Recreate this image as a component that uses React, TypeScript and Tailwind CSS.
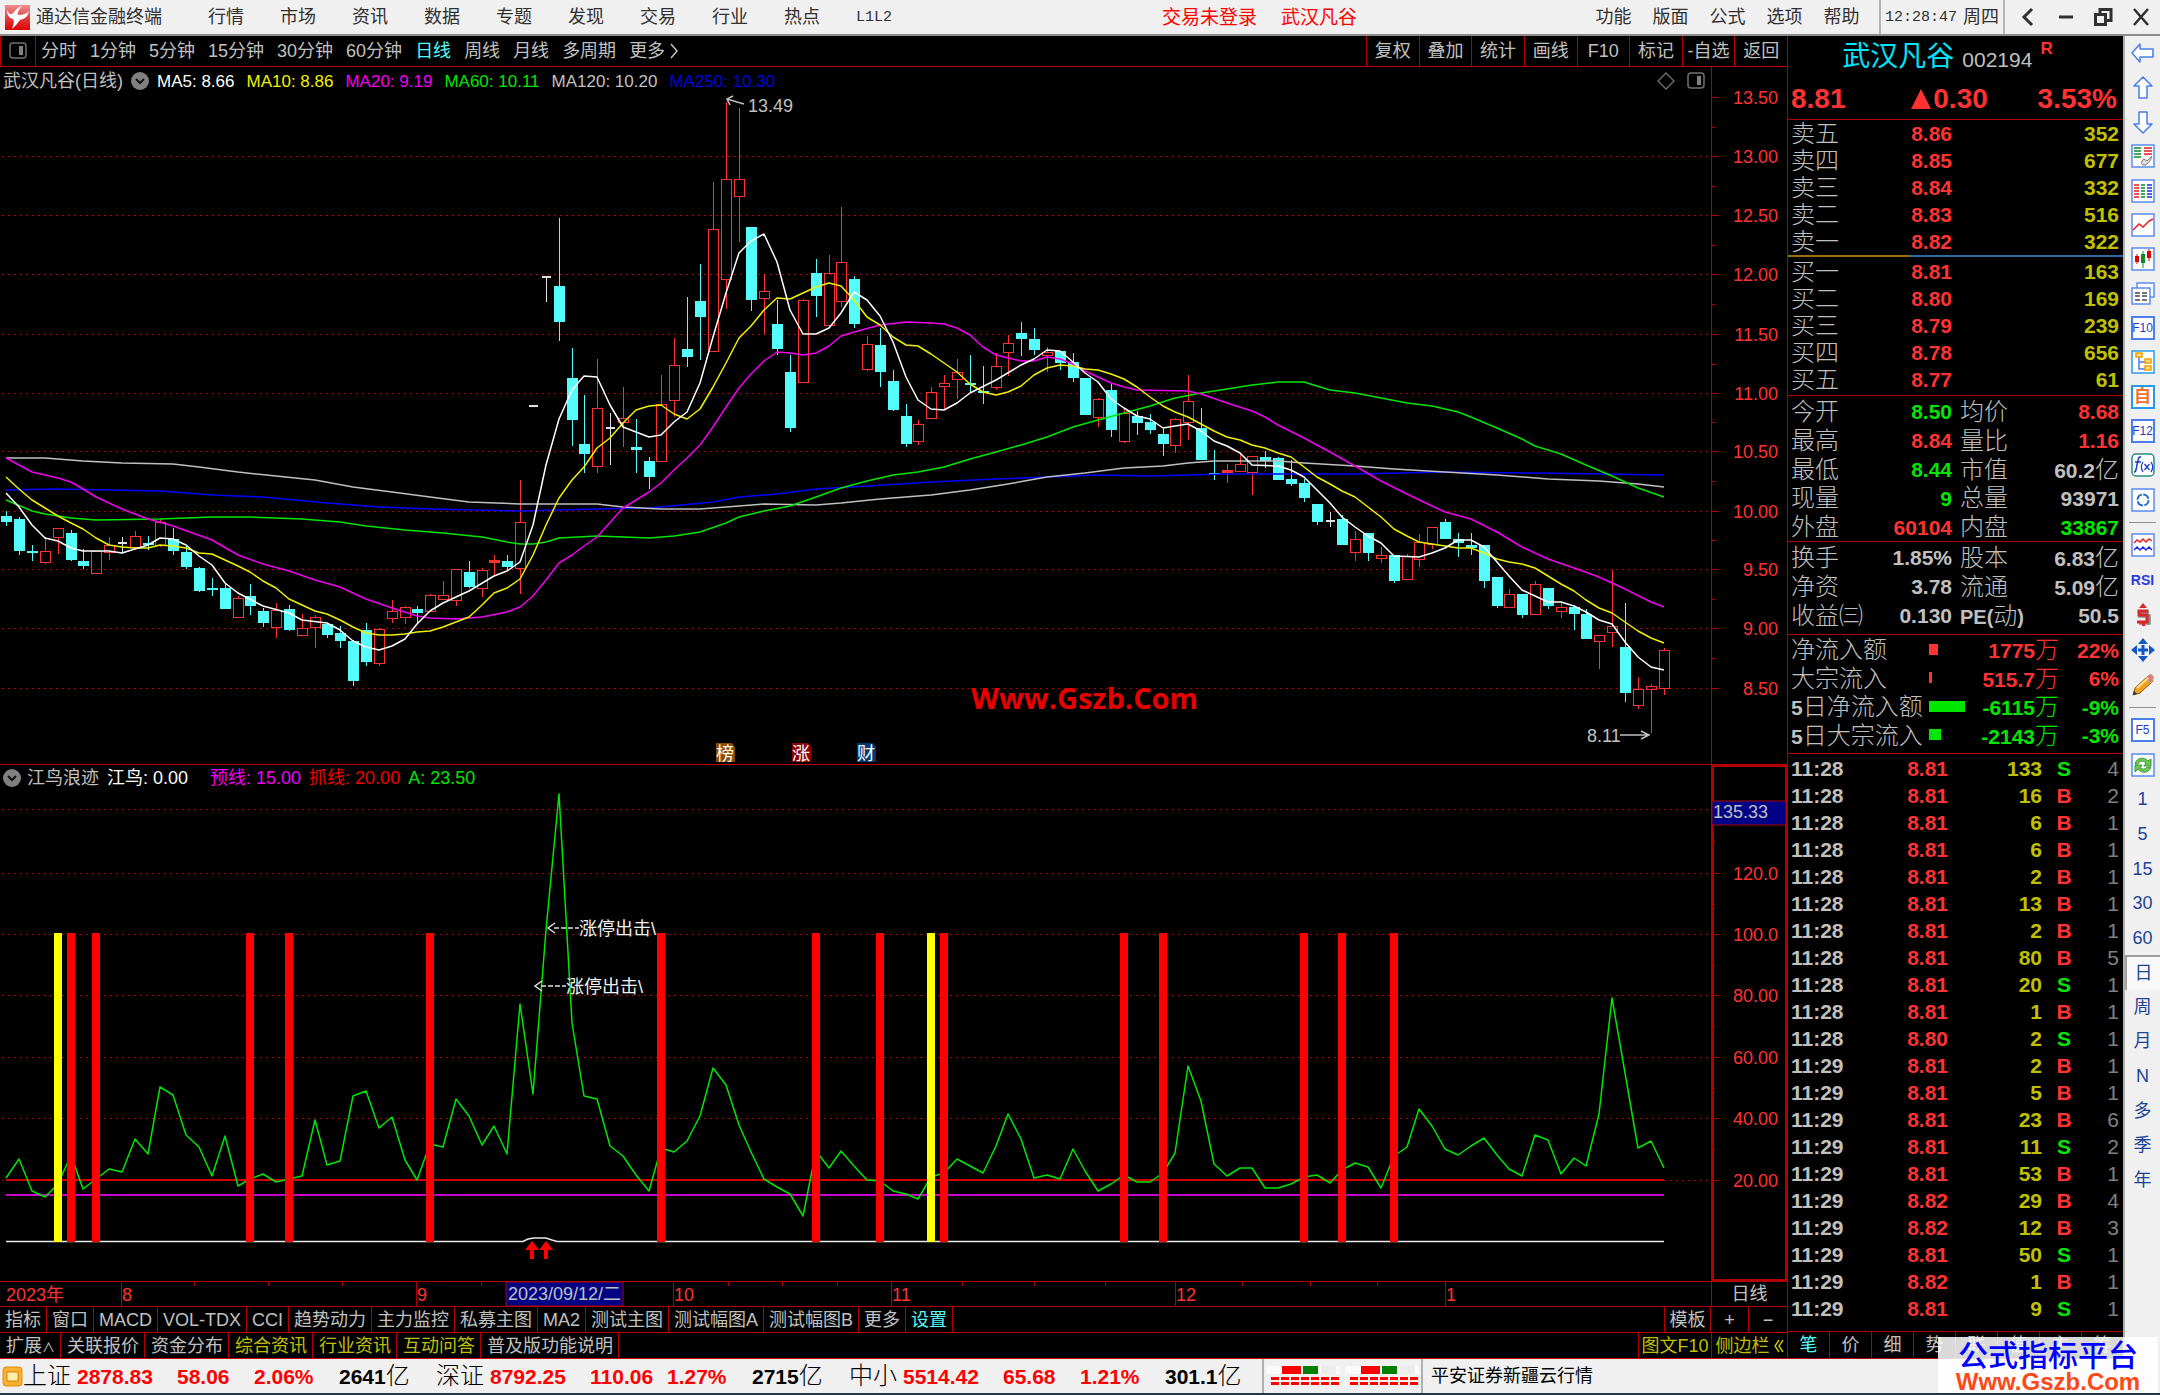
import React from "react";

type Kind = "c" | "r" | "w";
type Candle = [Kind, number, number, number, number];
type Point = [number, number];

const RED = "#ff3232";
const CYAN = "#54fcfc";
const LINE = "#b00000";

/* Candles: kind, high, body top, body bottom, low (vertical chart units). */
const candles: Candle[] = [
  ["c", 511, 516, 522, 526], ["c", 517, 519, 551, 555], ["c", 545, 551, 553, 561], ["r", 537, 551, 562, 564],
  ["r", 528, 528, 537, 554], ["c", 530, 533, 560, 561], ["c", 549, 561, 566, 569], ["r", 551, 551, 573, 573],
  ["r", 537, 545, 552, 560], ["w", 537, 543, 543, 553], ["r", 531, 536, 547, 547], ["c", 536, 543, 545, 550],
  ["r", 519, 522, 545, 547], ["c", 528, 539, 551, 555], ["c", 545, 552, 567, 569], ["c", 567, 568, 591, 592],
  ["c", 578, 588, 590, 596], ["c", 583, 588, 609, 609], ["r", 596, 598, 617, 617], ["c", 584, 596, 606, 615],
  ["c", 608, 611, 623, 627], ["r", 603, 610, 627, 638], ["c", 605, 609, 630, 631], ["r", 614, 628, 635, 635],
  ["r", 615, 617, 627, 648], ["c", 623, 624, 635, 638], ["c", 626, 633, 641, 648], ["c", 640, 641, 681, 686],
  ["c", 623, 630, 662, 666], ["r", 628, 629, 663, 666], ["r", 600, 611, 618, 623], ["r", 606, 607, 617, 624],
  ["c", 606, 609, 613, 623], ["r", 594, 595, 611, 611], ["r", 581, 595, 599, 600], ["r", 569, 569, 600, 606],
  ["c", 561, 572, 587, 588], ["r", 568, 570, 588, 597], ["r", 555, 560, 562, 576], ["c", 555, 561, 567, 570],
  ["r", 480, 522, 568, 594], ["w", 406, 406, 406, 406], ["w", 277, 277, 277, 302], ["c", 218, 286, 322, 341],
  ["c", 348, 378, 420, 446], ["c", 395, 444, 454, 473], ["r", 359, 408, 466, 473], ["w", 413, 428, 428, 465],
  ["r", 387, 418, 422, 447], ["c", 419, 447, 450, 473], ["c", 457, 461, 477, 489], ["r", 375, 404, 461, 462],
  ["r", 338, 365, 400, 417], ["c", 297, 349, 357, 367], ["c", 264, 301, 317, 360], ["r", 182, 229, 351, 351],
  ["r", 102, 179, 279, 309], ["r", 108, 179, 196, 242], ["c", 227, 227, 300, 311], ["r", 274, 291, 298, 334],
  ["c", 300, 324, 349, 355], ["c", 355, 372, 428, 432], ["r", 299, 300, 382, 383], ["c", 259, 273, 296, 317],
  ["r", 255, 273, 325, 327], ["r", 207, 262, 301, 307], ["c", 276, 279, 324, 328], ["r", 336, 344, 369, 371],
  ["c", 328, 345, 372, 387], ["c", 370, 381, 410, 411], ["c", 404, 416, 444, 447], ["r", 420, 424, 441, 445],
  ["r", 387, 392, 418, 418], ["r", 375, 383, 386, 409], ["r", 359, 372, 379, 399], ["c", 355, 383, 385, 393],
  ["c", 366, 391, 393, 404], ["r", 353, 366, 387, 390], ["r", 335, 343, 352, 376], ["c", 322, 333, 339, 356],
  ["c", 328, 339, 350, 355], ["r", 347, 352, 355, 372], ["c", 351, 351, 363, 370], ["c", 353, 362, 378, 382],
  ["c", 378, 378, 415, 415], ["r", 398, 399, 417, 427], ["c", 384, 390, 430, 437], ["r", 408, 413, 441, 443],
  ["c", 411, 416, 423, 435], ["c", 414, 422, 430, 434], ["c", 429, 434, 444, 456], ["r", 418, 419, 445, 453],
  ["r", 375, 401, 422, 440], ["c", 408, 428, 460, 460], ["c", 450, 473, 475, 480], ["r", 464, 470, 472, 483],
  ["r", 453, 464, 471, 472], ["r", 456, 456, 472, 495], ["c", 451, 457, 461, 468], ["c", 457, 458, 480, 480],
  ["c", 460, 479, 484, 486], ["c", 479, 483, 498, 502], ["c", 504, 504, 522, 525], ["w", 512, 521, 521, 527],
  ["c", 515, 519, 545, 545], ["r", 531, 539, 552, 561], ["c", 533, 533, 553, 561], ["r", 547, 555, 558, 563],
  ["c", 555, 555, 581, 583], ["r", 554, 556, 579, 579], ["r", 534, 542, 559, 567], ["r", 527, 527, 544, 549],
  ["c", 519, 522, 539, 539], ["c", 533, 539, 543, 557], ["c", 533, 545, 548, 555], ["c", 545, 545, 581, 588],
  ["c", 577, 577, 606, 608], ["r", 589, 594, 607, 607], ["c", 594, 594, 615, 618], ["r", 581, 584, 614, 615],
  ["c", 588, 588, 606, 609], ["r", 601, 607, 611, 618], ["c", 605, 607, 614, 630], ["c", 609, 614, 639, 639],
  ["r", 635, 635, 641, 669], ["r", 570, 626, 632, 647], ["c", 603, 647, 693, 702], ["r", 677, 689, 705, 709],
  ["r", 684, 686, 689, 733], ["r", 648, 650, 688, 695],
];

/* Moving averages: day index, vertical chart unit. */
const ma5: Point[] = [
  [0, 493], [1, 507], [2, 525], [3, 538], [4, 541], [5, 548], [6, 551], [8, 551], [9, 553], [11, 545], [12, 538],
  [13, 539], [14, 545], [15, 556], [16, 565], [17, 583], [18, 593], [20, 606], [22, 613], [23, 620], [25, 623],
  [26, 630], [27, 641], [28, 647], [29, 650], [30, 646], [31, 639], [32, 624], [33, 611], [34, 603], [36, 591],
  [38, 576], [39, 571], [40, 562], [41, 525], [42, 465], [43, 419], [44, 390], [45, 376], [46, 377], [47, 405],
  [48, 427], [49, 432], [50, 437], [51, 435], [52, 422], [53, 412], [54, 383], [55, 337], [56, 293], [57, 253],
  [58, 241], [59, 234], [60, 262], [61, 310], [62, 334], [63, 334], [64, 328], [65, 313], [66, 292], [67, 300],
  [68, 316], [69, 342], [70, 377], [71, 400], [72, 409], [73, 410], [74, 403], [75, 393], [77, 380], [79, 365],
  [80, 359], [81, 350], [82, 351], [83, 362], [84, 373], [85, 382], [86, 399], [87, 408], [88, 416], [89, 419],
  [90, 428], [91, 426], [92, 424], [93, 431], [94, 441], [95, 446], [96, 453], [97, 465], [99, 466], [100, 470],
  [101, 477], [102, 490], [103, 503], [104, 517], [105, 527], [106, 536], [107, 543], [108, 556], [110, 557],
  [111, 553], [112, 548], [113, 540], [114, 540], [115, 547], [116, 562], [117, 576], [118, 590], [119, 596],
  [120, 602], [121, 602], [122, 606], [123, 612], [124, 620], [125, 624], [126, 642], [127, 657], [128, 667],
  [129, 670],
];
const ma10: Point[] = [
  [0, 477], [1, 489], [2, 500], [3, 508], [4, 516], [5, 523], [6, 529], [7, 538], [8, 545], [9, 547], [10, 548],
  [11, 548], [12, 545], [13, 546], [14, 548], [15, 553], [16, 554], [17, 560], [18, 566], [19, 572], [20, 581],
  [21, 588], [22, 599], [23, 605], [24, 611], [25, 614], [26, 620], [27, 627], [28, 633], [29, 635], [30, 635],
  [31, 634], [32, 632], [33, 631], [34, 627], [35, 622], [36, 617], [37, 605], [38, 593], [39, 588], [40, 579],
  [41, 555], [42, 525], [43, 498], [44, 480], [45, 467], [46, 448], [47, 438], [48, 423], [49, 410], [50, 406],
  [51, 405], [52, 414], [53, 419], [54, 409], [55, 387], [56, 363], [57, 338], [58, 326], [59, 310], [60, 298],
  [61, 299], [62, 293], [63, 287], [64, 283], [65, 286], [66, 300], [67, 317], [68, 325], [69, 337], [70, 345],
  [71, 346], [72, 354], [73, 363], [74, 372], [75, 384], [76, 392], [77, 395], [78, 392], [79, 386], [80, 375],
  [81, 368], [82, 365], [83, 366], [84, 369], [85, 370], [86, 374], [87, 379], [88, 387], [89, 397], [90, 406],
  [91, 412], [92, 417], [93, 424], [94, 431], [95, 437], [96, 440], [97, 445], [98, 448], [99, 453], [100, 457],
  [101, 467], [102, 477], [103, 484], [104, 491], [105, 497], [106, 507], [107, 517], [108, 529], [109, 536],
  [110, 542], [111, 544], [112, 546], [113, 548], [114, 548], [115, 553], [116, 559], [117, 562], [118, 564],
  [119, 568], [120, 576], [121, 584], [122, 591], [123, 600], [124, 608], [125, 613], [126, 622], [127, 631],
  [128, 638], [129, 643],
];
const ma20: Point[] = [
  [0, 458], [2, 472], [4, 478], [5, 482], [6, 489], [7, 497], [9, 509], [11, 519], [13, 526], [16, 540], [18, 555],
  [20, 564], [22, 571], [24, 580], [26, 587], [28, 599], [30, 608], [32, 616], [33, 618], [35, 619], [37, 617],
  [39, 612], [40, 607], [41, 596], [42, 580], [43, 563], [44, 555], [45, 546], [46, 537], [48, 508], [50, 492],
  [51, 483], [52, 470], [53, 458], [54, 445], [55, 427], [56, 407], [57, 388], [58, 374], [59, 361], [60, 352],
  [61, 353], [62, 355], [63, 353], [64, 346], [65, 336], [66, 332], [68, 325], [70, 322], [72, 323], [73, 324],
  [74, 328], [75, 335], [76, 347], [77, 355], [78, 358], [79, 361], [80, 361], [81, 357], [82, 359], [83, 364],
  [84, 371], [85, 377], [86, 383], [87, 387], [88, 390], [92, 391], [93, 394], [95, 403], [97, 411], [98, 417],
  [99, 425], [101, 438], [103, 452], [105, 466], [107, 481], [109, 494], [111, 506], [112, 512], [114, 519],
  [116, 532], [118, 547], [120, 559], [122, 568], [124, 577], [126, 589], [128, 602], [129, 607],
];
const ma60: Point[] = [
  [0, 500], [2, 511], [3, 514], [5, 518], [7, 520], [12, 519], [16, 517], [19, 517], [23, 519], [26, 522], [28, 526],
  [31, 530], [34, 533], [37, 537], [39, 542], [40, 544], [41, 544], [42, 542], [43, 538], [46, 536], [50, 538],
  [52, 536], [54, 532], [56, 523], [57, 517], [59, 511], [61, 506], [63, 497], [65, 488], [67, 481], [69, 475],
  [71, 472], [73, 467], [75, 459], [77, 452], [79, 445], [81, 437], [83, 427], [85, 420], [87, 413], [89, 406],
  [91, 398], [93, 393], [95, 389], [97, 385], [99, 382], [101, 382], [103, 390], [105, 393], [107, 398], [109, 403],
  [111, 406], [113, 412], [114, 417], [116, 428], [118, 439], [119, 446], [120, 450], [121, 454], [123, 465],
  [125, 476], [127, 488], [129, 497],
];
const ma120: Point[] = [
  [0, 458], [3, 458], [6, 461], [9, 463], [13, 464], [15, 467], [18, 472], [21, 476], [24, 480], [27, 487],
  [30, 492], [33, 497], [36, 502], [40, 504], [46, 504], [48, 507], [51, 509], [54, 509], [57, 506], [59, 504],
  [63, 505], [65, 503], [68, 499], [72, 495], [75, 490], [78, 484], [81, 477], [84, 473], [87, 468], [90, 466],
  [92, 463], [94, 461], [99, 461], [101, 463], [105, 466], [108, 469], [112, 472], [116, 475], [120, 479],
  [124, 481], [127, 484], [129, 487],
];
const ma250: Point[] = [
  [0, 490], [4, 489], [8, 490], [12, 491], [16, 495], [20, 497], [25, 503], [29, 507], [33, 509], [40, 511],
  [46, 509], [50, 508], [55, 502], [57, 497], [60, 494], [63, 489], [67, 486], [72, 482], [77, 479], [81, 477],
  [85, 475], [89, 476], [92, 475], [95, 474], [105, 474], [112, 472], [119, 473], [124, 474], [129, 475],
];

const momentum: number[] = [
  1178, 1159, 1191, 1197, 1184, 1155, 1189, 1179, 1169, 1172, 1139, 1154, 1087, 1095, 1135, 1147, 1176, 1136, 1186,
  1179, 1174, 1182, 1179, 1176, 1120, 1165, 1161, 1096, 1091, 1128, 1117, 1160, 1180, 1144, 1147, 1099, 1116, 1145,
  1126, 1154, 1004, 1094, 930, 794, 1023, 1096, 1099, 1146, 1156, 1175, 1191, 1148, 1152, 1141, 1116, 1068, 1085,
  1125, 1152, 1179, 1187, 1194, 1216, 1151, 1168, 1151, 1166, 1180, 1181, 1191, 1194, 1199, 1177, 1173, 1159, 1166,
  1173, 1146, 1114, 1139, 1178, 1175, 1179, 1149, 1171, 1191, 1184, 1175, 1182, 1182, 1173, 1153, 1066, 1101, 1164,
  1176, 1168, 1168, 1188, 1188, 1184, 1177, 1175, 1183, 1170, 1163, 1167, 1188, 1156, 1147, 1109, 1126, 1149, 1155,
  1146, 1138, 1155, 1169, 1176, 1135, 1140, 1174, 1158, 1166, 1114, 998, 1073, 1148, 1141, 1168,
];

const signalBars: [number, string][] = [
  [4, "#ffff00"], [5, "#ff0000"], [7, "#ff0000"], [19, "#ff0000"], [22, "#ff0000"], [33, "#ff0000"],
  [51, "#ff0000"], [63, "#ff0000"], [68, "#ff0000"], [72, "#ffff00"], [73, "#ff0000"], [87, "#ff0000"],
  [90, "#ff0000"], [101, "#ff0000"], [104, "#ff0000"], [108, "#ff0000"],
];

const dayX = (i: number) => Math.floor(6.8 + 12.847 * i);
const toPoints = (pts: Point[]) => pts.map(([i, y]) => `${dayX(i)},${y}`).join(" ");

const priceTicks: [string, number][] = [
  ["13.50", 97], ["13.00", 156], ["12.50", 215], ["12.00", 274], ["11.50", 334], ["11.00", 393], ["10.50", 451],
  ["10.00", 511], ["9.50", 569], ["9.00", 628], ["8.50", 688],
];
const levelTicks: [string, number][] = [
  ["", 809], ["120.0", 873], ["100.0", 934], ["80.00", 995], ["60.00", 1057], ["40.00", 1118], ["20.00", 1180],
];

function Line({ pts, color }: { pts: string; color: string }) {
  return <polyline points={pts} fill="none" stroke={color} strokeWidth="1.5" strokeLinejoin="round" />;
}

function CandleShape({ c, i }: { c: Candle; i: number }) {
  const [kind, hi, top, bot, lo] = c;
  const x = dayX(i);
  if (kind === "w") {
    return (
      <g fill="#e0e0e0">
        <rect x={x - 4} y={top - 1} width="9" height="2" />
        {lo > hi && <rect x={x} y={hi} width="1" height={lo - hi} />}
      </g>
    );
  }
  if (kind === "c") {
    return (
      <g fill={CYAN}>
        <rect x={x} y={hi} width="1" height={Math.max(lo - hi, 1)} />
        <rect x={x - 5} y={top} width="11" height={Math.max(bot - top, 2)} />
      </g>
    );
  }
  return (
    <g fill={RED}>
      <rect x={x} y={hi} width="1" height={Math.max(top - hi, 0)} />
      <rect x={x} y={bot} width="1" height={Math.max(lo - bot, 0)} />
      {bot - top < 3 ? (
        <rect x={x - 5} y={top} width="11" height="3" />
      ) : (
        <path d={`M${x - 5} ${top}h11v${bot - top + 1}h-11zM${x - 4} ${top + 1}v${bot - top - 1}h9v-${bot - top - 1}z`} fillRule="evenodd" />
      )}
    </g>
  );
}

function Grid({ ticks }: { ticks: [string, number][] }) {
  return (
    <g>
      {ticks.map(([, y]) => (
        <line key={y} x1="2" x2="1711" y1={y + 0.5} y2={y + 0.5} stroke="#b00000" strokeWidth="1" strokeDasharray="2 4" />
      ))}
    </g>
  );
}

function Scale({ ticks }: { ticks: [string, number][] }) {
  return (
    <g>
      {ticks.map(([label, y], i) => (
        <g key={y}>
          <rect x="1711" y={y} width="8" height="1" fill={LINE} />
          {i < ticks.length - 1 && <rect x="1711" y={Math.round((y + ticks[i + 1][1]) / 2)} width="4" height="1" fill={LINE} />}
          <text x="1778" y={y + 7} textAnchor="end" fontSize="18" fill={RED}>{label}</text>
        </g>
      ))}
    </g>
  );
}

function PriceChart() {
  const marks: [string, number, string][] = [["榜", 716, "#8a4a00"], ["涨", 792, "#8b0000"], ["财", 857, "#003a70"]];
  return (
    <svg viewBox="0 67 1787 697" className="block h-auto w-full" role="img" aria-label="日线">
      <Grid ticks={priceTicks.slice(1)} />
      <rect x="1711" y="67" width="1" height="697" fill={LINE} />
      <Scale ticks={priceTicks} />
      <g shapeRendering="crispEdges">
        {candles.map((c, i) => <CandleShape key={i} c={c} i={i} />)}
      </g>
      <Line pts={toPoints(ma250)} color="#0000ff" />
      <Line pts={toPoints(ma120)} color="#c0c0c0" />
      <Line pts={toPoints(ma60)} color="#00e600" />
      <Line pts={toPoints(ma20)} color="#f000f0" />
      <Line pts={toPoints(ma10)} color="#f0f000" />
      <Line pts={toPoints(ma5)} color="#ffffff" />
      <path d="M744 104L727 99M733 96L727 99L730 105" fill="none" stroke="#c0c0c0" strokeWidth="1.5" />
      <text x="748" y="112" fontSize="18" fill="#c0c0c0">13.49</text>
      <path d="M1620 735H1649M1641 731L1649 735L1641 739" fill="none" stroke="#c0c0c0" strokeWidth="1.5" />
      <text x="1587" y="742" fontSize="18" fill="#c0c0c0">8.11</text>
      <text x="971" y="709" fontSize="29" fontWeight="700" fill="#e60000" style={{ fontFamily: '"Open Sans","Noto Sans",sans-serif' }}>
        Www.Gszb.Com
      </text>
      {marks.map(([t, x, bg]) => (
        <g key={t}>
          <path d={`M${x} 743h16l3 4v15h-19z`} fill={bg} />
          <text x={x} y="760" fontSize="18" fill="#ffffff">{t}</text>
        </g>
      ))}
    </svg>
  );
}

function IndicatorChart() {
  return (
    <svg viewBox="0 765 1787 516" className="block h-auto w-full" role="img" aria-label="江鸟浪迹">
      <Grid ticks={levelTicks} />
      <rect x="6" y="1179" width="1658" height="2" fill="#d00000" />
      <rect x="6" y="1194" width="1658" height="2" fill="#c800c8" />
      <path d="M6 1241.500H523L528 1239L534 1238H546L552 1240L557 1241.500H1664" fill="none" stroke="#e8e8e8" strokeWidth="1.500" />
      <Line pts={momentum.map((y, i) => `${dayX(i)},${y}`).join(" ")} color="#00e600" />
      {signalBars.map(([i, color]) => <rect key={i} x={dayX(i) - 4} y="933" width="8" height="309" fill={color} />)}
      {[532, 546].map((x) => (
        <path key={x} d={`M${x} 1241l7 9h-5v9h-4v-9h-5z`} fill="#ff0000" />
      ))}
      {[[547, 928], [534, 986]].map(([x, y]) => (
        <g key={x}>
          <path d={`M${x + 8} ${y - 5}L${x + 1} ${y}L${x + 8} ${y + 5}`} fill="none" stroke="#e0e0e0" strokeWidth="1.5" />
          <path d={`M${x + 7} ${y}h25`} stroke="#e0e0e0" strokeWidth="1.5" strokeDasharray="5 2" />
          <text x={x + 32} y={y + 7} fontSize="18" fill="#f0f0f0">涨停出击\</text>
        </g>
      ))}
      <rect x="1713" y="766" width="73" height="514" fill="none" stroke={LINE} strokeWidth="2" />
      <rect x="1711" y="765" width="1" height="516" fill={LINE} />
      <Scale ticks={levelTicks} />
      <rect x="1712" y="801" width="74" height="24" fill="#000084" stroke={LINE} />
      <text x="1713" y="818" fontSize="18" fill="#c0c0c0">135.33</text>
    </svg>
  );
}

function DateAxis() {
  const months: [string, number][] = [["8", 121], ["9", 416], ["10", 673], ["11", 891], ["12", 1175], ["1", 1445]];
  const minor = [194, 268, 342, 481, 728, 782, 837, 962, 1034, 1105, 1242, 1310, 1377];
  return (
    <svg viewBox="0 1282 1711 24" className="block h-auto min-w-0 flex-1" role="img" aria-label="日期">
      <text x="6" y="1301" fontSize="18" fill={RED}>2023年</text>
      {months.map(([m, x]) => (
        <g key={m}>
          <rect x={x} y="1282" width="1" height="24" fill={LINE} />
          <text x={x + 1} y="1301" fontSize="18" fill={RED}>{m}</text>
        </g>
      ))}
      {minor.map((x) => <rect key={x} x={x} y="1282" width="1" height="4" fill={LINE} />)}
      <rect x="506" y="1282" width="117" height="24" fill="#000084" stroke={LINE} />
      <text x="508" y="1300" fontSize="18" fill="#c0c0c0">2023/09/12/二</text>
    </svg>
  );
}

/* ---------- header ---------- */

function PanelIcon() {
  return (
    <svg viewBox="0 0 18 18" className="size-[18px]" aria-hidden="true">
      <rect x="1" y="1" width="16" height="15" rx="3" fill="none" stroke="#707070" strokeWidth="1.5" />
      <rect x="10" y="4" width="4" height="9" fill="#808080" />
    </svg>
  );
}

function MenuBar() {
  const menus = ["行情", "市场", "资讯", "数据", "专题", "发现", "交易", "行业", "热点", "L1L2"];
  const right = ["功能", "版面", "公式", "选项", "帮助"];
  return (
    <header className="flex h-9 items-center border-b-2 border-[#8c8c8c] bg-[#f0f0f0] text-[18px] text-[#303030]">
      <svg viewBox="0 0 25 25" className="ml-[5px] size-[25px]" aria-hidden="true">
        <defs>
          <linearGradient id="logo" x1="0" y1="0" x2="0" y2="1">
            <stop offset="0" stopColor="#f09090" />
            <stop offset="0.5" stopColor="#e04040" />
            <stop offset="1" stopColor="#e00000" />
          </linearGradient>
        </defs>
        <rect width="25" height="25" fill="url(#logo)" />
        <path d="M2 5C4 10 7 10 9 7C11 4 14 2 17 1C14 4 12 8 13 10C17 10 21 9 24 6C23 12 19 14 15 15C13 17 11 21 7 24C8 20 10 17 8 14C4 13 2 10 2 5Z" fill="#fff" />
      </svg>
      <span className="ml-1.5 w-[154px] whitespace-nowrap">通达信金融终端</span>
      <nav className="flex">
        {menus.map((m) => (
          <button key={m} className={m === "L1L2" ? "w-[72px] font-['Liberation_Mono'] text-[15px]" : "w-[72px]"}>{m}</button>
        ))}
      </nav>
      <div className="flex flex-1 justify-center gap-6 pl-6 text-[19px] text-[#ff0000]">
        <button>交易未登录</button>
        <button>武汉凡谷</button>
      </div>
      <nav className="mr-[9px] flex">
        {right.map((m) => <button key={m} className="w-[57px]">{m}</button>)}
      </nav>
      <div className="flex h-full w-[126px] items-center justify-between border-x-2 border-[#b4b4b4] px-1">
        <span className="font-['Liberation_Mono'] text-[15px]">12:28:47</span>
        <span>周四</span>
      </div>
      <div className="flex w-[155px] items-center justify-around pl-1 text-[#303030]">
        <button aria-label="后退">
          <svg viewBox="0 0 20 20" className="size-5" fill="none" stroke="currentColor" strokeWidth="3"><path d="M14 2L6 10L14 18" /></svg>
        </button>
        <button aria-label="最小化">
          <svg viewBox="0 0 20 20" className="size-5" fill="none" stroke="currentColor" strokeWidth="3"><path d="M3 10H17" /></svg>
        </button>
        <button aria-label="还原">
          <svg viewBox="0 0 20 20" className="size-5" fill="none" stroke="currentColor" strokeWidth="3"><path d="M2.500 7.500H12.500V17.500H2.500ZM7 7V2.500H18V13.500H13" /></svg>
        </button>
        <button aria-label="关闭">
          <svg viewBox="0 0 20 20" className="size-5" fill="none" stroke="currentColor" strokeWidth="2.500"><path d="M3 2L17 18M17 2L3 18" /></svg>
        </button>
      </div>
    </header>
  );
}

function PeriodBar() {
  const periods = ["分时", "1分钟", "5分钟", "15分钟", "30分钟", "60分钟", "日线", "周线", "月线", "多周期", "更多"];
  const tools = ["复权", "叠加", "统计", "画线", "F10", "标记", "-自选", "返回"];
  return (
    <div className="flex h-[31px] items-stretch border-b border-[#c00000]">
      <button aria-label="面板" className="flex w-9 items-center justify-center border-x border-[#b00000]"><PanelIcon /></button>
      <nav className="flex flex-1 items-center gap-[13px] pl-[5px] whitespace-nowrap">
        {periods.map((p) => (
          <button key={p} className={p === "日线" ? "text-[#54fcfc]" : ""}>{p}</button>
        ))}
        <svg viewBox="0 0 8 18" className="-ml-2 h-[18px] w-2" fill="none" stroke="#c0c0c0" strokeWidth="1.500" aria-hidden="true"><path d="M1 2L7 9L1 16" /></svg>
      </nav>
      <nav className="flex w-[421px]">
        {tools.map((t) => <button key={t} className="flex-1 border-l border-[#b00000]">{t}</button>)}
      </nav>
    </div>
  );
}

function DropBadge() {
  return (
    <button aria-label="展开" className="flex size-[18px] items-center justify-center rounded-full bg-[#808080]">
      <svg viewBox="0 0 12 12" className="size-3" fill="none" stroke="#101010" strokeWidth="2"><path d="M2 4L6 8L10 4" /></svg>
    </button>
  );
}

/* ---------- bottom tabs ---------- */

function BottomTabs() {
  const row1 = ["指标", "窗口", "MACD", "VOL-TDX", "CCI", "趋势动力", "主力监控", "私募主图", "MA2", "测试主图", "测试幅图A", "测试幅图B", "更多", "设置"];
  const row2 = ["关联报价", "资金分布", "综合资讯", "行业资讯", "互动问答", "普及版功能说明"];
  const yellow = ["综合资讯", "行业资讯", "互动问答"];
  return (
    <>
      <div className="flex h-[26px] border-t border-[#b00000]">
        {row1.map((t) => (
          <button key={t} className={t === "设置" ? "border-r border-[#b00000] px-[5px] text-[#54fcfc]" : "border-r border-[#b00000] px-[5px]"}>{t}</button>
        ))}
        <button className="ml-auto w-[47px] border-x border-[#b00000]">模板</button>
        <button className="w-[38px] border-r border-[#b00000]">+</button>
        <button className="w-[38px]">−</button>
      </div>
      <div className="flex h-[27px] border-y border-[#c00000]">
        <button className="border-r border-[#b00000] pr-[5px] pl-1.5">扩展<span className="text-[13px]">∧</span></button>
        {row2.map((t) => (
          <button key={t} className={yellow.includes(t) ? "border-r border-[#b00000] pr-[5px] pl-1.5 text-[#c0c000]" : "border-r border-[#b00000] pr-[5px] pl-1.5"}>{t}</button>
        ))}
        <button className="ml-auto w-[74px] border-x border-[#b00000] text-[#c0c000]">图文F10</button>
        <button className="flex w-[75px] items-center justify-center gap-1 text-[#c0c000]">
          侧边栏
          <svg viewBox="0 0 10 14" className="h-3.5 w-2.5" fill="none" stroke="currentColor" strokeWidth="1.500" aria-hidden="true"><path d="M5 1L1 7L5 13M9 1L5 7L9 13" /></svg>
        </button>
      </div>
    </>
  );
}

/* ---------- quote panel ---------- */

function Num({ value, className }: { value: string; className?: string }) {
  const unit = /[亿万]$/.test(value) ? value.slice(-1) : "";
  const digits = unit ? value.slice(0, -1) : value;
  return (
    <span className={className}>
      <b className="text-[21px] font-bold">{digits}</b>
      {unit && <span className="text-[24px] font-light">{unit}</span>}
    </span>
  );
}

const tone = { r: "text-[#ff3232]", g: "text-[#00e600]", w: "text-[#c0c0c0]", y: "text-[#c0c000]" };
type Tone = keyof typeof tone;

function Book({ rows }: { rows: [string, string, string][] }) {
  return (
    <table className="w-full table-fixed">
      <tbody>
        {rows.map(([l, p, v]) => (
          <tr key={l} className="h-[27px]">
            <th scope="row" className="w-[116px] pl-[3px] text-left text-[24px] font-light">{l}</th>
            <td className="w-[48px] text-right"><Num value={p} className={tone.r} /></td>
            <td className="pr-1 text-right"><Num value={v} className={tone.y} /></td>
          </tr>
        ))}
      </tbody>
    </table>
  );
}

type Stat = [string, string, Tone, string, string, Tone];

function Stats({ rows, className }: { rows: Stat[]; className: string }) {
  return (
    <table className={className}>
      <tbody>
        {rows.map(([l1, v1, t1, l2, v2, t2]) => (
          <tr key={l1}>
            <th scope="row" className="w-[76px] pt-0.5 pl-[3px] text-left text-[24px] font-light whitespace-nowrap">{l1}</th>
            <td className="w-[88px] pt-0.5 text-right"><Num value={v1} className={tone[t1]} /></td>
            <th scope="row" className="w-[72px] pt-0.5 pl-2 text-left text-[24px] font-light whitespace-nowrap">
              {l2.startsWith("PE") ? <><b className="text-[20px] font-bold">PE(</b>动<b className="text-[20px] font-bold">)</b></> : l2}
            </th>
            <td className="pt-0.5 pr-1 text-right whitespace-nowrap"><Num value={v2} className={tone[t2]} /></td>
          </tr>
        ))}
      </tbody>
    </table>
  );
}

const stats1: Stat[] = [
  ["今开", "8.50", "g", "均价", "8.68", "r"],
  ["最高", "8.84", "r", "量比", "1.16", "r"],
  ["最低", "8.44", "g", "市值", "60.2亿", "w"],
  ["现量", "9", "g", "总量", "93971", "w"],
  ["外盘", "60104", "r", "内盘", "33867", "g"],
];
const stats2: Stat[] = [
  ["换手", "1.85%", "w", "股本", "6.83亿", "w"],
  ["净资", "3.78", "w", "流通", "5.09亿", "w"],
  ["收益㈢", "0.130", "w", "PE(动)", "50.5", "w"],
];
const flows: [string, number, string, string, Tone][] = [
  ["净流入额", 9, "1775万", "22%", "r"],
  ["大宗流入", 3, "515.7万", "6%", "r"],
  ["5日净流入额", 36, "-6115万", "-9%", "g"],
  ["5日大宗流入", 12, "-2143万", "-3%", "g"],
];
const trades: [string, string, string, string, string][] = [
  ["11:28", "8.81", "133", "S", "4"], ["11:28", "8.81", "16", "B", "2"], ["11:28", "8.81", "6", "B", "1"],
  ["11:28", "8.81", "6", "B", "1"], ["11:28", "8.81", "2", "B", "1"], ["11:28", "8.81", "13", "B", "1"],
  ["11:28", "8.81", "2", "B", "1"], ["11:28", "8.81", "80", "B", "5"], ["11:28", "8.81", "20", "S", "1"],
  ["11:28", "8.81", "1", "B", "1"], ["11:28", "8.80", "2", "S", "1"], ["11:29", "8.81", "2", "B", "1"],
  ["11:29", "8.81", "5", "B", "1"], ["11:29", "8.81", "23", "B", "6"], ["11:29", "8.81", "11", "S", "2"],
  ["11:29", "8.81", "53", "B", "1"], ["11:29", "8.82", "29", "B", "4"], ["11:29", "8.82", "12", "B", "3"],
  ["11:29", "8.81", "50", "S", "1"], ["11:29", "8.82", "1", "B", "1"], ["11:29", "8.81", "9", "S", "1"],
];

function QuotePanel() {
  return (
    <aside className="flex w-[336px] flex-col border-l border-[#b00000]">
      <h1 className="flex h-[38px] items-center justify-center gap-2 pt-1 pr-4 text-[28px] text-[#00e4ff]">
        武汉凡谷
        <span className="pt-1 text-[21px] text-[#c0c0c0]">002194</span>
        <sup className="text-[17px] font-bold text-[#ff3232]">R</sup>
      </h1>
      <div className="flex h-[46px] items-center justify-between border-b border-[#b00000] pt-1 pr-1.5 pl-[3px] text-[28px] font-bold text-[#ff3232]">
        <span>8.81</span>
        <span className="flex items-center pl-4">
          <svg viewBox="0 0 20 20" className="size-5" aria-hidden="true"><path d="M10 0L20 20H0Z" fill="#ff3232" /></svg>
          <span className="pl-0.5">0.30</span>
        </span>
        <span>3.53%</span>
      </div>
      <Book rows={[["卖五", "8.86", "352"], ["卖四", "8.85", "677"], ["卖三", "8.84", "332"], ["卖二", "8.83", "516"], ["卖一", "8.82", "322"]]} />
      <div className="flex h-[3px] pb-px">
        <div className="w-[122px] bg-[#9c6c10]" />
        <div className="flex-1 bg-[#2a6aa0]" />
      </div>
      <Book rows={[["买一", "8.81", "163"], ["买二", "8.80", "169"], ["买三", "8.79", "239"], ["买四", "8.78", "656"], ["买五", "8.77", "61"]]} />
      <Stats rows={stats1} className="mt-0.5 h-[146px] w-full table-fixed border-t border-[#b00000]" />
      <Stats rows={stats2} className="h-[88px] w-full table-fixed border-t border-[#b00000]" />
      <table className="mt-[5px] h-[115px] w-full table-fixed border-t border-[#b00000]">
        <tbody>
          {flows.map(([l, w, v, p, t]) => (
            <tr key={l}>
              <th scope="row" className="w-[141px] pt-0.5 pl-[3px] text-left text-[24px] font-light whitespace-nowrap">
                {l.startsWith("5") ? <><b className="text-[21px] font-bold">5</b>{l.slice(1)}</> : l}
              </th>
              <td className="w-[38px]"><div className={t === "r" ? "h-[11px] bg-[#ff3232]" : "h-[11px] bg-[#00e600]"} style={{ width: w }} /></td>
              <td className="w-[92px] pt-0.5 text-right whitespace-nowrap"><Num value={v} className={tone[t]} /></td>
              <td className="pt-0.5 pr-1 text-right"><Num value={p} className={tone[t]} /></td>
            </tr>
          ))}
        </tbody>
      </table>
      <table className="mt-1 w-full table-fixed border-t border-[#b00000] text-[21px] font-bold">
        <tbody>
          {trades.map(([time, p, v, side, n], i) => (
            <tr key={i} className="h-[27px]">
              <td className="w-[110px] pt-0.5 pl-[3px]">{time}</td>
              <td className="w-[50px] pt-0.5 text-right text-[#ff3232]">{p}</td>
              <td className="w-[94px] pt-0.5 text-right text-[#c0c000]">{v}</td>
              <td className={side === "B" ? "w-[44px] pt-0.5 text-center text-[#ff3232]" : "w-[44px] pt-0.5 text-center text-[#00e600]"}>{side}</td>
              <td className="pt-0.5 pr-1 text-right font-normal text-[#808080]">{n}</td>
            </tr>
          ))}
        </tbody>
      </table>
      <nav className="mt-auto flex h-7 border-y border-[#b00000]">
        {["笔", "价", "细", "势", "联", "值", "主", "筹"].map((t) => (
          <button key={t} className={t === "笔" ? "flex-1 border-r border-[#b00000] text-[#54fcfc]" : "flex-1 border-r border-[#b00000] last:border-r-0"}>{t}</button>
        ))}
      </nav>
    </aside>
  );
}

/* ---------- icon rail ---------- */

function Box({ children, stroke = "#5a8cf0" }: { children?: React.ReactNode; stroke?: string }) {
  return (
    <svg viewBox="0 0 24 24" className="size-6" fill="none" aria-hidden="true">
      <rect x="1" y="1" width="22" height="22" fill="#fff" stroke={stroke} strokeWidth="1.500" />
      {children}
    </svg>
  );
}

function RailLabel({ children }: { children: string }) {
  return (
    <span className="flex size-6 items-center justify-center border-2 border-[#4a7ee8] bg-white text-[12px] text-[#1a3cc8]">{children}</span>
  );
}

function Arrow({ d }: { d: string }) {
  return (
    <svg viewBox="0 0 24 24" className="size-6" aria-hidden="true"><path d={d} fill="#fff" stroke="#4a7ee8" strokeWidth="1.500" strokeLinejoin="round" /></svg>
  );
}

const railTop: [string, React.ReactNode][] = [
  ["后退", <Arrow d="M1 12L9 3V8H22V16H9V21Z" />],
  ["上翻", <Arrow d="M12 1L21 10H16V22H8V10H3Z" />],
  ["下翻", <Arrow d="M12 23L21 14H16V2H8V14H3Z" />],
  ["自选", <Box><path d="M3 4H10M3 7H10M3 10H10M3 13H10" stroke="#0a8a2a" strokeWidth="1.500" /><path d="M13 4H21M13 7H21M13 10H21" stroke="#f01818" strokeWidth="1.500" /><path d="M11 17C9 20 13 23 16 20C20 17 20 14 21 12L16 17L13 15Z" fill="#ddd" stroke="#777" /></Box>],
  ["列表", <Box><path d="M3 6H8M3 9H8M3 12H8M3 15H8M3 18H8" stroke="#f01818" strokeWidth="1.500" /><path d="M10 6H14M10 9H14M10 12H14M10 15H14M10 18H14" stroke="#0a8a2a" strokeWidth="1.500" /><path d="M16 6H21M16 9H21M16 12H21M16 15H21M16 18H21" stroke="#1a2af0" strokeWidth="1.500" /></Box>],
  ["分时图", <Box><path d="M2 17L8 11L12 14L18 8L22 6" stroke="#f01818" strokeWidth="1.500" /></Box>],
  ["K线图", <Box><path d="M6 7V17M18 2V14" stroke="#e00000" /><rect x="4" y="9" width="4" height="6" fill="#e00000" /><rect x="16" y="4" width="4" height="7" fill="#e00000" /><path d="M12 4V21" stroke="#0a8a2a" /><rect x="10" y="7" width="4" height="9" fill="#0a8a2a" /></Box>],
  ["资料", <svg viewBox="0 0 24 24" className="size-6" fill="#fff" aria-hidden="true"><path d="M6 6V1H23V15H19" stroke="#5a8cf0" strokeWidth="1.500" /><rect x="1" y="6" width="18" height="16" stroke="#5a8cf0" strokeWidth="1.500" /><path d="M4 11H9M11 11H16M4 14H9M11 14H16M4 18H9M11 18H16" stroke="#444" strokeWidth="1.500" /></svg>],
  ["F10", <RailLabel>F10</RailLabel>],
  ["板块树", <Box stroke="#2a9ae8"><path d="M8 6V19H14M8 12H14" stroke="#4a7ee8" strokeWidth="1.500" /><path d="M5 3H11V7H5ZM14 9H20V13H14ZM14 16H20V20H14Z" fill="#ffe080" stroke="#f0a000" strokeWidth="1.500" /></Box>],
  ["自定", <span className="flex size-6 items-center justify-center border-2 border-[#2a9ae8] bg-white text-[17px] font-bold text-[#f07030]">自</span>],
  ["F12", <RailLabel>F12</RailLabel>],
  ["公式", <svg viewBox="0 0 24 24" className="size-6" fill="none" aria-hidden="true"><rect x="1" y="1" width="22" height="22" rx="4" fill="#fff" stroke="#2a8a8a" strokeWidth="1.500" /><path d="M10 4C7 3 7 8 6 12C5 17 5 19 3 19M4 9H10" stroke="#1a3cc8" strokeWidth="1.500" /><path d="M12 9C10 12 10 16 12 19M20 9C22 12 22 16 20 19M13.500 11L18.500 17M18.500 11L13.500 17" stroke="#1a3cc8" strokeWidth="1.300" /></svg>],
  ["圆", <Box><circle cx="12" cy="12" r="5.500" stroke="#1a6ac8" strokeWidth="1.800" strokeDasharray="7 1.500" /></Box>],
];

const railMid: [string, React.ReactNode][] = [
  ["波形", <Box><path d="M3 10L6 7L9 9L12 6L15 9L18 6L21 8" stroke="#f01818" strokeWidth="1.500" /><path d="M3 17L6 14L9 17L12 14L15 17L18 14L21 17" stroke="#1a2af0" strokeWidth="1.500" /></Box>],
  ["RSI", <span className="text-[14px] font-bold text-[#2a3ce0]">RSI</span>],
  ["资金", <svg viewBox="0 0 24 24" className="size-6" fill="none" aria-hidden="true"><path d="M18 9H9V13H18V20H8" stroke="#888" strokeWidth="3.500" /><path d="M17 8H8V12H16V19H6" stroke="#d82828" strokeWidth="3" /><path d="M12 0L16 5H8ZM11 19H14V23H11Z" fill="#d82828" /></svg>],
  ["移动", <svg viewBox="0 0 24 24" className="size-6" fill="#1058c8" aria-hidden="true"><path d="M12 0L17 6H7ZM12 24L17 18H7ZM0 12L6 7V17ZM24 12L18 7V17Z" /><path d="M12 7V17M7 12H17" stroke="#1058c8" strokeWidth="3" /></svg>],
  ["画笔", <svg viewBox="0 0 24 24" className="size-6" aria-hidden="true"><path d="M2 22L4 15L17 3L22 8L9 20Z" fill="#f0a020" stroke="#8a5a10" /><path d="M15 5L18 2C20 0 24 4 22 6L20 10Z" fill="#e87878" stroke="#a8a8a8" /><path d="M6 15L17 5" stroke="#ffe080" strokeWidth="2" /><path d="M2 22L3 18L6 21Z" fill="#333" /></svg>],
];

const railLow = ["1", "5", "15", "30", "60", "日", "周", "月", "N", "多", "季", "年"];

function Rail() {
  return (
    <nav className="flex w-[37px] flex-col border-l-2 border-[#b0b0b0] bg-[#f0f0f0] text-[#1c4496]">
      <div className="grid h-[481px] auto-rows-fr">
        {railTop.map(([label, icon]) => (
          <button key={label} aria-label={label} className="flex items-center justify-center">{icon}</button>
        ))}
      </div>
      <hr className="mx-1 my-[5px] border-[#909090]" />
      <div className="grid h-[174px] auto-rows-fr">
        {railMid.map(([label, icon]) => (
          <button key={label} aria-label={label} className="flex items-center justify-center">{icon}</button>
        ))}
      </div>
      <hr className="mx-1 my-[5px] border-[#909090]" />
      <div className="grid h-[484px] auto-rows-fr text-[18px]">
        <button className="flex items-center justify-center"><RailLabel>F5</RailLabel></button>
        <button aria-label="刷新" className="flex items-center justify-center">
          <Box>
            <path d="M4 11C5 5 13 3 17 8L20 6V13H13L15 10C12 7 8 8 7 11Z" fill="#70c850" stroke="#3a9a3a" />
            <path d="M20 14C18 20 11 21 7 16L4 19V12H11L9 15C12 17 15 16 16 14Z" fill="#70c850" stroke="#3a9a3a" />
          </Box>
        </button>
        {railLow.map((t) => (
          <button key={t} className={t === "日" ? "border-t-2 border-l-2 border-[#a0a0a0] bg-[#f8f8f8]" : ""}>{t}</button>
        ))}
      </div>
    </nav>
  );
}

/* ---------- status bar ---------- */

const indices: [string, string, string, string, string][] = [
  ["上证", "2878.83", "58.06", "2.06%", "2641亿"],
  ["深证", "8792.25", "110.06", "1.27%", "2715亿"],
  ["中小", "5514.42", "65.68", "1.21%", "301.1亿"],
];

function Meter() {
  return (
    <svg viewBox="0 0 74 20" className="h-5 w-[74px]" aria-hidden="true">
      <rect width="74" height="8" fill="#fafafa" />
      <rect x="16" width="19" height="8" fill="#ff0000" />
      <rect x="37" width="15" height="8" fill="#008000" />
      <rect x="55" width="15" height="8" fill="#ececec" />
      <path d="M5 12.500H74M5 17.500H74" stroke="#ff0000" strokeWidth="3" strokeDasharray="8 2" />
    </svg>
  );
}

function StatusBar() {
  return (
    <footer className="flex h-9 items-center border-b-2 border-[#22384a] bg-[#f0f0f0] text-black">
      <svg viewBox="0 0 21 21" className="ml-0.5 size-[21px]" aria-hidden="true">
        <rect x="1" y="1" width="19" height="19" rx="3" fill="#f8b030" stroke="#e09010" />
        <rect x="5" y="6" width="11" height="9" fill="#fff0b0" stroke="#d88000" />
      </svg>
      {indices.map(([name, value, change, pct, amount]) => (
        <div key={name} className="flex w-[413px] items-center whitespace-nowrap text-[#ff0000]">
          <span className="w-[54px] text-[24px] font-light text-black">{name}</span>
          <b className="w-[100px] text-[21px] font-bold">{value}</b>
          <b className="w-[77px] text-[21px] font-bold">{change}</b>
          <b className="w-[85px] text-[21px] font-bold">{pct}</b>
          <Num value={amount} className="text-black" />
        </div>
      ))}
      <div className="flex h-full w-[161px] items-center justify-center gap-[5px] border-x-2 border-[#b0b0b0]">
        <Meter />
        <Meter />
      </div>
      <span className="pl-2 text-[18px]">平安证券新疆云行情</span>
    </footer>
  );
}

export default function App() {
  return (
    <div className="relative flex min-h-screen flex-col bg-black font-['Liberation_Sans','Noto_Sans_CJK_SC',sans-serif] text-[18px] leading-none font-normal text-[#c0c0c0]">
      <MenuBar />
      <div className="flex flex-1">
        <main className="flex min-w-0 flex-1 flex-col">
          <PeriodBar />
          <section className="relative border-b border-[#c00000]">
            <PriceChart />
            <div className="absolute inset-x-0 top-0 flex h-7 items-center gap-3 pr-[82px] pl-[3px] text-[17px] whitespace-nowrap">
              <span className="flex items-center gap-2">
                <span className="text-[18px]">武汉凡谷(日线)</span>
                <DropBadge />
                <span className="text-white">MA5: 8.66</span>
              </span>
              <span className="text-[#f0f000]">MA10: 8.86</span>
              <span className="text-[#f000f0]">MA20: 9.19</span>
              <span className="text-[#00e600]">MA60: 10.11</span>
              <span>MA120: 10.20</span>
              <span className="text-[#0000e0]">MA250: 10.30</span>
              <span className="ml-auto flex items-center gap-3">
                <svg viewBox="0 0 18 18" className="size-[18px]" fill="none" stroke="#707070" strokeWidth="1.300" aria-hidden="true"><path d="M9 1L17 9L9 17L1 9Z" /></svg>
                <PanelIcon />
              </span>
            </div>
          </section>
          <section className="relative border-b border-[#b00000]">
            <IndicatorChart />
            <div className="absolute inset-x-0 top-0 flex h-[26px] items-center gap-2 pl-[3px] whitespace-nowrap">
              <span className="flex items-center gap-1.5"><DropBadge />江鸟浪迹</span>
              <span className="text-white">江鸟: 0.00</span>
              <span className="pl-3.5 text-[#f000f0]">预线: 15.00</span>
              <span className="text-[#f00000]">抓线: 20.00</span>
              <span className="text-[#00e600]">A: 23.50</span>
            </div>
          </section>
          <div className="flex">
            <DateAxis />
            <button className="w-[76px] border-l border-[#b00000]">日线</button>
          </div>
          <BottomTabs />
        </main>
        <QuotePanel />
        <Rail />
      </div>
      <StatusBar />
      <div className="absolute right-0.5 bottom-0.5 flex h-14 w-[220px] flex-col items-center justify-end bg-white/85 whitespace-nowrap">
        <span className="text-[30px] leading-[30px] font-medium text-[#0000ff]">公式指标平台</span>
        <span className="text-[24px] leading-[22px] font-bold text-[#ff4818]">Www.Gszb.Com</span>
      </div>
    </div>
  );
}
